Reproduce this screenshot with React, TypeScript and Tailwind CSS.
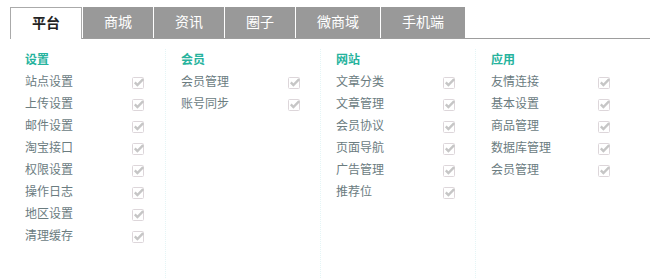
import React from 'react';

const tabs = ['平台', '商城', '资讯', '圈子', '微商域', '手机端'];

const groups = [
  { title: '设置', items: ['站点设置', '上传设置', '邮件设置', '淘宝接口', '权限设置', '操作日志', '地区设置', '清理缓存'] },
  { title: '会员', items: ['会员管理', '账号同步'] },
  { title: '网站', items: ['文章分类', '文章管理', '会员协议', '页面导航', '广告管理', '推荐位'] },
  { title: '应用', items: ['友情连接', '基本设置', '商品管理', '数据库管理', '会员管理'] },
];

function CheckIcon() {
  return (
    <svg width="13" height="13" viewBox="0 0 13 13" className="shrink-0">
      <rect x="0.5" y="1.5" width="11" height="11" rx="1" fill="#fff" stroke="#ddd6da" />
      <path d="M2.8 6.4 L5.4 9 L11.2 3.2" fill="none" stroke="#c6c6c6" strokeWidth="2.4" />
    </svg>
  );
}

export default function App() {
  return (
    <div className="w-[652px] h-[278px] bg-white flex flex-col pt-[7px] pl-[10px] pr-[2px] font-['Liberation_Sans','Noto_Sans_CJK_SC',sans-serif]">
      {/* Tabs */}
      <div className="flex h-[32px] border-b border-[#9d9d9d] shrink-0">
        {tabs.map((t, i) =>
          i === 0 ? (
            <div
              key={t}
              className="h-[32px] px-[21px] border border-b-0 border-[#aaaaaa] bg-white text-[14px] font-bold text-[#222] flex items-center justify-center"
            >
              {t}
            </div>
          ) : (
            <div
              key={t}
              className="h-[31px] ml-px px-[21px] bg-[#999999] text-[14px] text-white flex items-center justify-center"
            >
              {t}
            </div>
          )
        )}
      </div>

      {/* Menu groups */}
      <div className="flex-1 grid grid-cols-[155px_155px_155px_155px] mt-[10px]">
        {groups.map((g, i) => (
          <div
            key={g.title}
            className={
              i === 0
                ? 'pl-[15px] text-[12px]'
                : 'pl-[15px] text-[12px] border-l border-dotted border-[#e4f5f6]'
            }
          >
            <div className="h-[22px] flex items-center font-bold text-[#26b39d]">{g.title}</div>
            {g.items.map((it) => (
              <div key={it} className="h-[22px] flex items-center">
                <span className="w-[107px] text-[#6b7c7f]">{it}</span>
                <CheckIcon />
              </div>
            ))}
          </div>
        ))}
      </div>
    </div>
  );
}
